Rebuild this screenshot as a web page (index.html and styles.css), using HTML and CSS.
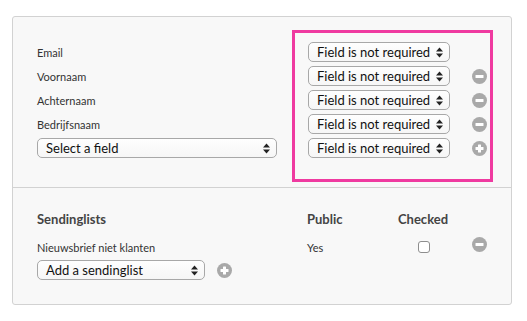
FILE: index.html
```html
<!DOCTYPE html>
<html>
<head>
<meta charset="utf-8">
<link rel="stylesheet" href="styles.css">
</head>
<body>
<div class="panel">
  <div class="fields">
    <div class="labels">
      <div class="row"><span class="label">Email</span></div>
      <div class="row"><span class="label">Voornaam</span></div>
      <div class="row"><span class="label">Achternaam</span></div>
      <div class="row"><span class="label">Bedrijfsnaam</span></div>
      <div class="row">
        <div class="select select-field"><span>Select a field</span>
          <svg class="arrows" width="7" height="11" viewBox="0 0 7 11"><path d="M3.5 0.5 L7 4.5 H0 Z M3.5 10.5 L7 6.5 H0 Z" fill="#222"/></svg>
        </div>
      </div>
    </div>
    <div class="required">
      <div class="row">
        <div class="select select-req"><span>Field is not required</span>
          <svg class="arrows" width="7" height="11" viewBox="0 0 7 11"><path d="M3.5 0.5 L7 4.5 H0 Z M3.5 10.5 L7 6.5 H0 Z" fill="#222"/></svg>
        </div>
      </div>
      <div class="row">
        <div class="select select-req"><span>Field is not required</span>
          <svg class="arrows" width="7" height="11" viewBox="0 0 7 11"><path d="M3.5 0.5 L7 4.5 H0 Z M3.5 10.5 L7 6.5 H0 Z" fill="#222"/></svg>
        </div>
        <svg class="icon" width="15" height="15" viewBox="0 0 15 15"><circle cx="7.5" cy="7.5" r="7.5" fill="#a9a9a9"/><rect x="3.5" y="6" width="8" height="3" rx="0.5" fill="#fff"/></svg>
      </div>
      <div class="row">
        <div class="select select-req"><span>Field is not required</span>
          <svg class="arrows" width="7" height="11" viewBox="0 0 7 11"><path d="M3.5 0.5 L7 4.5 H0 Z M3.5 10.5 L7 6.5 H0 Z" fill="#222"/></svg>
        </div>
        <svg class="icon" width="15" height="15" viewBox="0 0 15 15"><circle cx="7.5" cy="7.5" r="7.5" fill="#a9a9a9"/><rect x="3.5" y="6" width="8" height="3" rx="0.5" fill="#fff"/></svg>
      </div>
      <div class="row">
        <div class="select select-req"><span>Field is not required</span>
          <svg class="arrows" width="7" height="11" viewBox="0 0 7 11"><path d="M3.5 0.5 L7 4.5 H0 Z M3.5 10.5 L7 6.5 H0 Z" fill="#222"/></svg>
        </div>
        <svg class="icon" width="15" height="15" viewBox="0 0 15 15"><circle cx="7.5" cy="7.5" r="7.5" fill="#a9a9a9"/><rect x="3.5" y="6" width="8" height="3" rx="0.5" fill="#fff"/></svg>
      </div>
      <div class="row">
        <div class="select select-req"><span>Field is not required</span>
          <svg class="arrows" width="7" height="11" viewBox="0 0 7 11"><path d="M3.5 0.5 L7 4.5 H0 Z M3.5 10.5 L7 6.5 H0 Z" fill="#222"/></svg>
        </div>
        <svg class="icon" width="15" height="15" viewBox="0 0 15 15"><circle cx="7.5" cy="7.5" r="7.5" fill="#a9a9a9"/><rect x="3.5" y="6" width="8" height="3" rx="0.5" fill="#fff"/><rect x="6" y="3.5" width="3" height="8" rx="0.5" fill="#fff"/></svg>
      </div>
    </div>
  </div>
  <div class="lists">
    <div class="head">Sendinglists</div>
    <div class="head">Public</div>
    <div class="head">Checked</div>
    <div></div>
    <div class="cell">Nieuwsbrief niet klanten</div>
    <div class="cell">Yes</div>
    <div class="cell center"><span class="checkbox"></span></div>
    <div class="cell icon-cell"><svg class="icon" width="15" height="15" viewBox="0 0 15 15"><circle cx="7.5" cy="7.5" r="7.5" fill="#a9a9a9"/><rect x="3.5" y="6" width="8" height="3" rx="0.5" fill="#fff"/></svg></div>
    <div class="add-row">
      <div class="select select-list"><span>Add a sendinglist</span>
        <svg class="arrows" width="7" height="11" viewBox="0 0 7 11"><path d="M3.5 0.5 L7 4.5 H0 Z M3.5 10.5 L7 6.5 H0 Z" fill="#222"/></svg>
      </div>
      <svg class="icon" width="15" height="15" viewBox="0 0 15 15"><circle cx="7.5" cy="7.5" r="7.5" fill="#a9a9a9"/><rect x="3.5" y="6" width="8" height="3" rx="0.5" fill="#fff"/><rect x="6" y="3.5" width="3" height="8" rx="0.5" fill="#fff"/></svg>
    </div>
  </div>
</div>
</body>
</html>
```
FILE: styles.css
```css
html, body {
  margin: 0;
  padding: 0;
  background: #fff;
}
body {
  padding: 16px 14px 0 12px;
  font-family: Lato, "DejaVu Sans", sans-serif;
  color: #333;
}
.panel {
  width: 500px;
  height: 289px;
  background: #f8f8f8;
  border: 1px solid #d2d2d2;
  border-radius: 3px;
  box-sizing: border-box;
  display: flex;
  flex-direction: column;
}
.fields {
  display: flex;
  padding: 13px 0 5px 24px;
  border-bottom: 1px solid #d2d2d2;
}
.labels {
  width: 255px;
  padding-top: 12px;
}
.row {
  height: 20px;
  margin-bottom: 4px;
  display: flex;
  align-items: center;
}
.label {
  font-size: 11px;
  color: #333;
}
.required {
  width: 201px;
  height: 152px;
  box-sizing: border-box;
  border: 3px solid #ef3aa0;
  padding: 9px 0 0 13px;
}
.required .icon {
  margin-left: 22px;
}
.select {
  box-sizing: border-box;
  height: 20px;
  border: 1px solid #a8a8a8;
  border-radius: 5px;
  background: linear-gradient(#fefefe, #f6f6f6);
  display: flex;
  align-items: center;
  justify-content: space-between;
  padding: 0 6px 0 8px;
  font-size: 13px;
  color: #111;
  white-space: nowrap;
}
.select span {
  line-height: 18px;
}
.select-req { width: 142px; }
.select-field { width: 240px; }
.select-list { width: 168px; }
.arrows { flex: none; }
.icon { flex: none; display: block; }
.lists {
  display: grid;
  grid-template-columns: 270px 91px 52px auto;
  padding: 20px 0 0 24px;
  align-content: start;
}
.head {
  font-size: 13px;
  font-weight: bold;
  color: #444;
  height: 22px;
  line-height: 22px;
}
.cell {
  font-size: 11px;
  color: #333;
  height: 20px;
  display: flex;
  align-items: center;
  margin-top: 7px;
}
.center { justify-content: center; }
.icon-cell {
  padding-left: 22px;
  align-items: flex-start;
  padding-top: 0;
}
.checkbox {
  width: 12px;
  height: 12px;
  box-sizing: border-box;
  border: 1px solid #8e8e8e;
  border-radius: 3px;
  background: #fff;
}
.add-row {
  grid-column: 1 / -1;
  display: flex;
  align-items: center;
  gap: 12px;
  margin-top: 3px;
}
```
